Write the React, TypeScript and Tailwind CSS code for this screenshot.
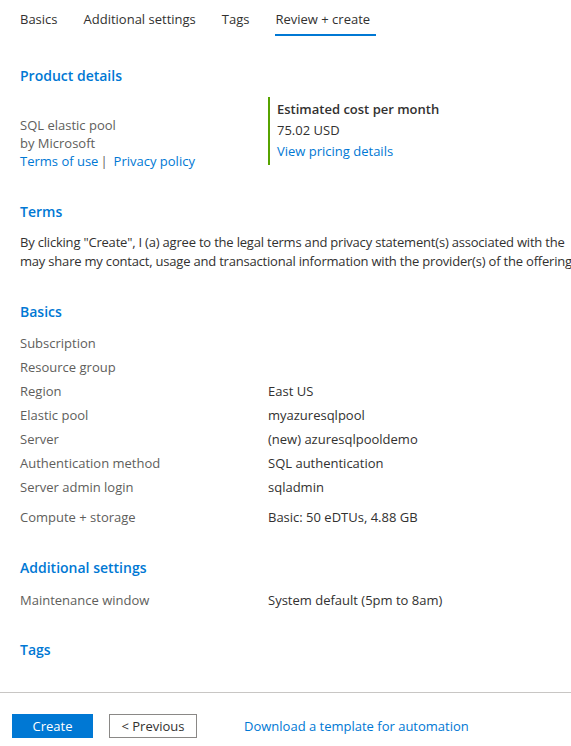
const labelRows = [
  { label: 'Subscription', value: '' },
  { label: 'Resource group', value: '' },
  { label: 'Region', value: 'East US' },
  { label: 'Elastic pool', value: 'myazuresqlpool' },
  { label: 'Server', value: '(new) azuresqlpooldemo' },
  { label: 'Authentication method', value: 'SQL authentication' },
  { label: 'Server admin login', value: 'sqladmin' },
]

function Row({ label, value, className = '' }: { label: string; value: string; className?: string }) {
  return (
    <div className={`flex h-[24px] items-center ${className}`}>
      <span className="w-[248px] shrink-0 text-[#605e5c]">{label}</span>
      <span className="text-[#323130]">{value}</span>
    </div>
  )
}

function Heading({ children, className = '' }: { children: React.ReactNode; className?: string }) {
  return <h2 className={`text-[14px] leading-[20px] font-semibold text-[#0078d4] ${className}`}>{children}</h2>
}

export default function App() {
  return (
    <div
      className="w-[571px] h-[746px] overflow-hidden bg-white text-[13px] leading-[18px] text-[#323130]"
      style={{ fontFamily: '"Open Sans", "Noto Sans", sans-serif' }}
    >
      {/* Tabs */}
      <nav className="flex gap-[26px] pl-[20px] pt-[10px]">
        {['Basics', 'Additional settings', 'Tags'].map(t => (
          <div key={t} className="h-[26px] text-[#323130]">{t}</div>
        ))}
        <div className="h-[26px] w-[101px] border-b-2 border-[#0078d4] text-[#323130]">Review + create</div>
      </nav>

      <div className="px-[20px]">
        <Heading className="mt-[30px]">Product details</Heading>

        <div className="mt-[11px] flex">
          <div className="w-[248px] shrink-0 pt-[19px] text-[#605e5c]">
            <div>SQL elastic pool</div>
            <div>by Microsoft</div>
            <div>
              <a className="text-[#0078d4]">Terms of use</a>
              <span className="ml-[2px] mr-[6px]">|</span>
              <a className="text-[#0078d4]">Privacy policy</a>
            </div>
          </div>
          <div className="h-[68px] border-l-2 border-[#57a300] pl-[7px] pt-[2px] leading-[21px]">
            <div className="font-semibold text-[#323130]">Estimated cost per month</div>
            <div className="text-[#323130]">75.02 USD</div>
            <a className="text-[#0078d4]">View pricing details</a>
          </div>
        </div>

        <Heading className="mt-[32px]">Terms</Heading>
        <div className="mt-[11px] whitespace-nowrap leading-[19px] tracking-[-0.2px] text-[#323130]">
          <div>By clicking "Create", I (a) agree to the legal terms and privacy statement(s) associated with the</div>
          <div>may share my contact, usage and transactional information with the provider(s) of the offering</div>
        </div>

        <Heading className="mt-[31px]">Basics</Heading>
        <div className="mt-[9px]">
          {labelRows.map(r => (
            <Row key={r.label} {...r} />
          ))}
          <Row label="Compute + storage" value="Basic: 50 eDTUs, 4.88 GB" className="mt-[6px]" />
        </div>

        <Heading className="mt-[29px]">Additional settings</Heading>
        <Row label="Maintenance window" value="System default (5pm to 8am)" className="mt-[10px]" />

        <Heading className="mt-[28px]">Tags</Heading>
      </div>

      {/* Footer */}
      <div className="mt-[32px] border-t border-[#c8c6c4] px-[12px] pt-[21px]">
        <div className="flex items-center">
          <button className="h-[24px] w-[81px] bg-[#0078d4] text-white">Create</button>
          <button className="ml-[16px] h-[24px] w-[88px] border border-[#8a8886] bg-white text-[#323130]">&lt; Previous</button>
          <a className="ml-[47px] text-[#0078d4]">Download a template for automation</a>
        </div>
      </div>
    </div>
  )
}
